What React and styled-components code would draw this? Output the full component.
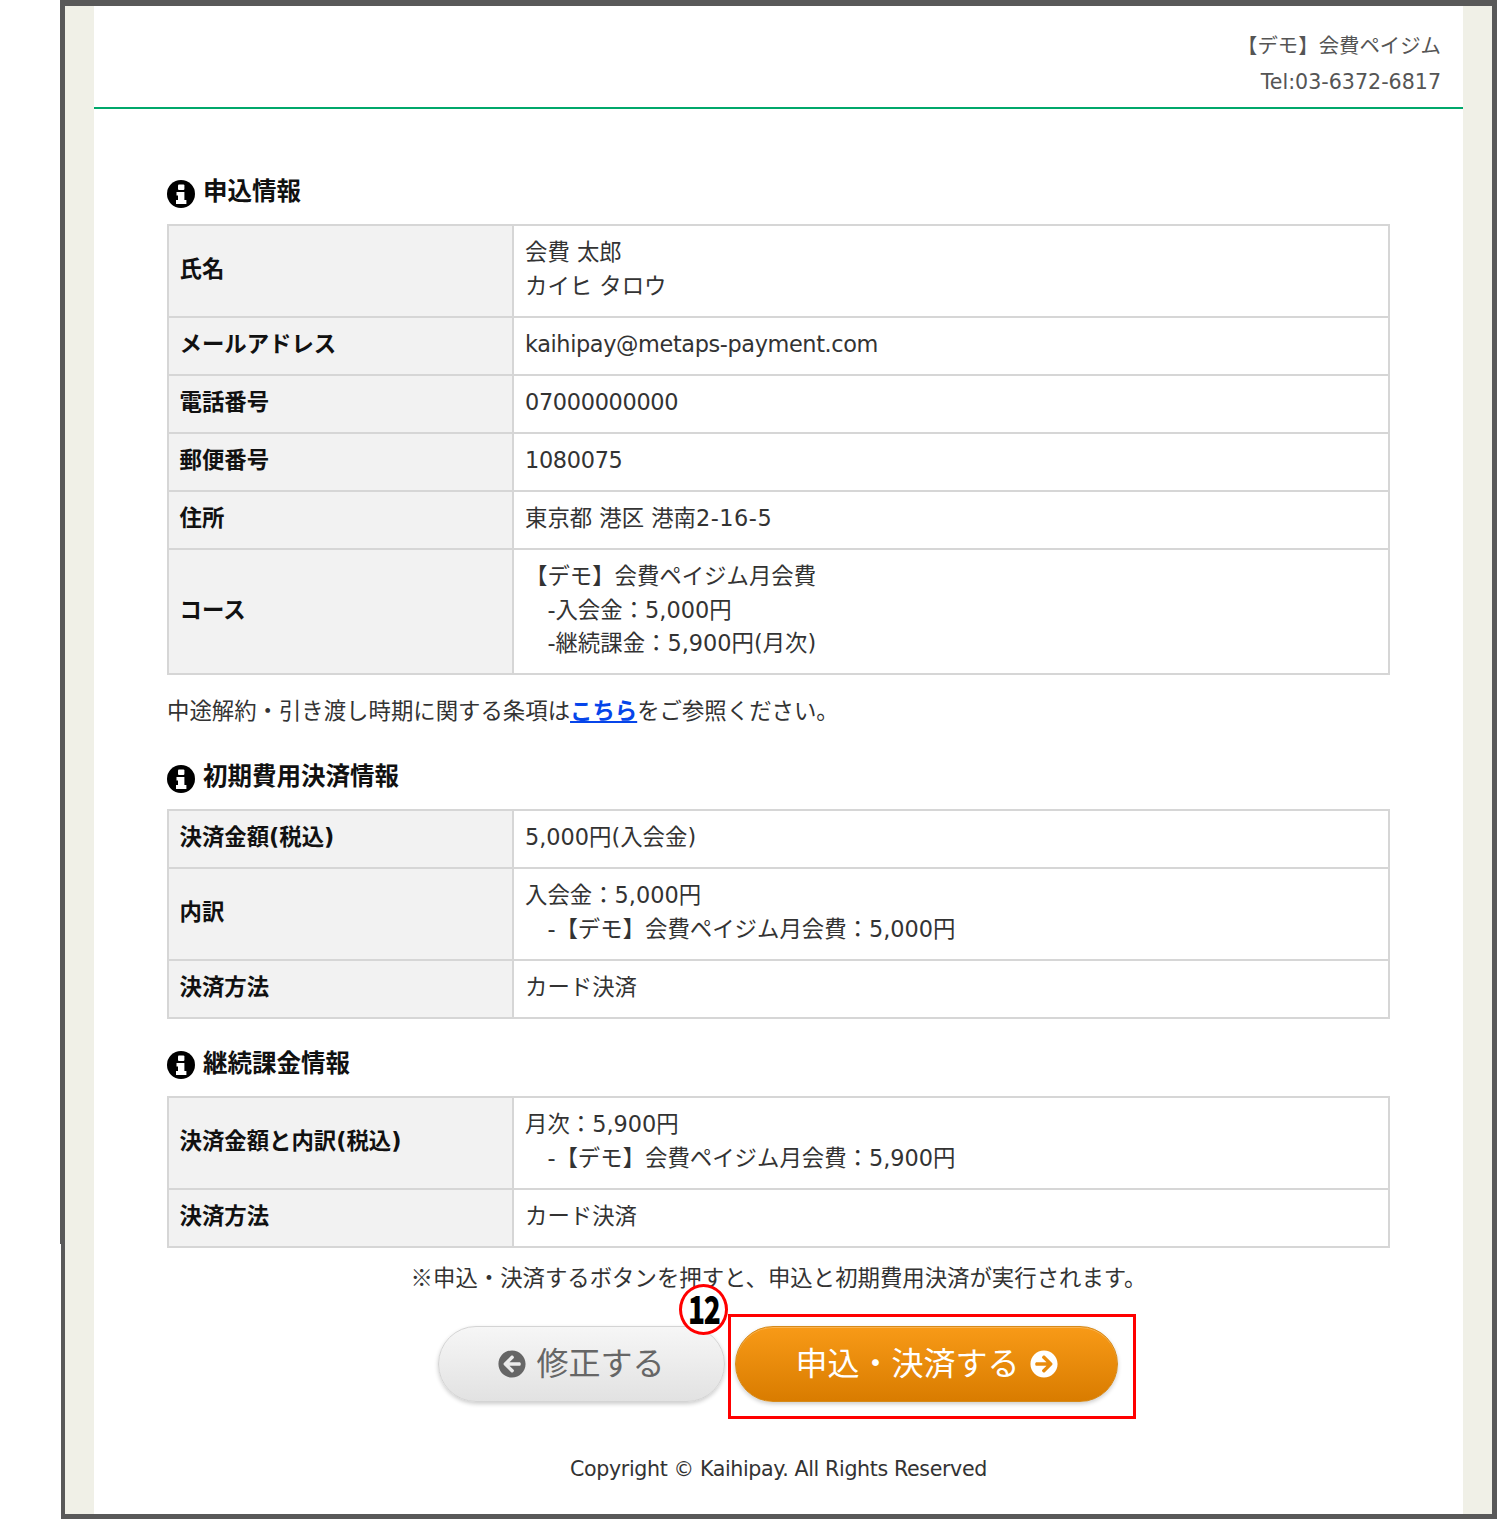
import React from "react";
import styled, { createGlobalStyle } from "styled-components";
import { FaArrowCircleLeft, FaArrowCircleRight } from "react-icons/fa";

const Global = createGlobalStyle`
  html, body { margin: 0; padding: 0; background: #fff; }
  body {
    font-family: "DejaVu Sans", "Noto Sans CJK JP", sans-serif;
    font-size: 22.4px;
    line-height: 33.8px;
    color: #333;
  }
`;

const Page = styled.div`
  width: 1498px;
  height: 1520px;
  padding-left: 60px;
  box-sizing: border-box;
  overflow: hidden;
`;

const Frame = styled.div`
  position: relative;
  width: 1437px;
  height: 1519px;
  box-sizing: border-box;
  border: 5px solid #595959;
  border-top-width: 6px;
  background: #f0f0e7;
  padding: 0 29px;
  &::after {
    content: "";
    position: absolute;
    left: -5px;
    top: 1238px;
    width: 1px;
    height: 280px;
    background: #fff;
  }
`;

const Sheet = styled.div`
  height: 100%;
  background: #fff;
`;

const Header = styled.header`
  height: 103px;
  box-sizing: border-box;
  border-bottom: 2px solid #00a86b;
  padding: 22px 22px 0 0;
  text-align: right;
  font-size: 20.4px;
  line-height: 36px;
  color: #555;
`;

const Tel = styled.div`
  font-size: 20.6px;
`;

const Main = styled.main`
  padding: 65px 73px 0;
`;

const Heading = styled.h2`
  display: flex;
  align-items: center;
  gap: 8px;
  margin: ${(p) => p.$top}px 0 14px;
  height: 36px;
  font-size: 24.5px;
  font-weight: 700;
  line-height: 36px;
  color: #111;
`;

const InfoSvg = styled.svg`
  flex: none;
  width: 28px;
  height: 28px;
  margin-top: 3px;
`;

const InfoIcon = () => (
  <InfoSvg viewBox="0 0 28 28" aria-hidden="true">
    <circle cx="14" cy="14" r="14" fill="#000" />
    <rect x="11" y="4.5" width="6.4" height="5.4" rx="1" fill="#fff" />
    <path d="M9.5 12H17.4V20H19.4V24H9V20H11V15.4H9.5Z" fill="#fff" />
  </InfoSvg>
);

const Table = styled.table`
  width: 100%;
  table-layout: fixed;
  border-collapse: collapse;
`;

const Head = styled.th`
  width: 345px;
  box-sizing: border-box;
  background: #f2f2f2;
  border: 2px solid #d6d6d6;
  padding: 10px 12px 12.2px 10.5px;
  text-align: left;
  font-weight: 700;
  color: #111;
`;

const Cell = styled.td`
  border: 2px solid #d6d6d6;
  padding: 10px 12px 12.2px 11px;
  color: #333;
  white-space: pre;
`;

const Latin = styled.span`
  letter-spacing: ${(p) => p.$spacing}px;
`;

const Mark = styled.span`
  font-family: "Noto Sans CJK JP", sans-serif;
`;

const Note = styled.p`
  margin: 20px 0 0;
  color: #333;
`;

const Link = styled.a`
  color: #0645ea;
  font-weight: 700;
  text-decoration: underline;
`;

const Centered = styled.p`
  margin: 12px 0 0;
  text-align: center;
  color: #333;
`;

const Actions = styled.div`
  display: flex;
  justify-content: flex-start;
  gap: 10px;
  margin: 31px 0 0 271px;
`;

const Button = styled.a`
  display: flex;
  align-items: center;
  justify-content: center;
  gap: 10px;
  box-sizing: border-box;
  width: ${(p) => p.$width}px;
  height: 76px;
  border-radius: 38px;
  font-size: 32px;
  white-space: nowrap;
  svg { width: 28px; height: 28px; flex: none; }
`;

const BackButton = styled(Button)`
  color: #666;
  border: 1px solid #d4d4d4;
  background: linear-gradient(#f6f6f6, #e2e2e2);
  box-shadow: 0 2px 4px rgba(0, 0, 0, 0.2);
`;

const SubmitButton = styled(Button)`
  color: #fff;
  border: 1px solid #d68a1a;
  background: linear-gradient(#f89a17, #d97c00);
  box-shadow: 0 2px 4px rgba(0, 0, 0, 0.2), inset 0 1px 0 rgba(255, 255, 255, 0.25);
`;

const Highlight = styled.div`
  position: absolute;
  left: 663px;
  top: 1308px;
  width: 408px;
  height: 105px;
  box-sizing: border-box;
  border: 3.5px solid #f00;
`;

const Badge = styled.div`
  position: absolute;
  left: 614px;
  top: 1278px;
  width: 49px;
  height: 51px;
  box-sizing: border-box;
  border: 3.5px solid #f00;
  border-radius: 50%;
  background: #fff;
  color: #000;
  display: flex;
  align-items: center;
  justify-content: center;
`;

const BadgeText = styled.span`
  display: block;
  margin-top: -4px;
  font-family: "Noto Sans CJK JP", sans-serif;
  font-size: 39px;
  font-weight: 900;
  letter-spacing: -2px;
  line-height: 1;
  transform: scaleX(0.72);
`;

const Footer = styled.footer`
  margin-top: 51px;
  text-align: center;
  font-size: 20.6px;
  letter-spacing: -0.37px;
  color: #333;
`;

const Row = ({ label, children }) => (
  <tr>
    <Head>{label}</Head>
    <Cell>{children}</Cell>
  </tr>
);

export default function App() {
  return (
    <Page>
      <Global />
      <Frame>
        <Sheet>
          <Header>
            <div>【デモ】会費ペイジム</div>
            <Tel>Tel:03-6372-6817</Tel>
          </Header>
          <Main>
            <Heading $top={0}><InfoIcon />申込情報</Heading>
            <Table>
              <tbody>
                <Row label="氏名">{"会費 太郎\nカイヒ タロウ"}</Row>
                <Row label="メールアドレス"><Latin $spacing={-0.38}>kaihipay@metaps-payment.com</Latin></Row>
                <Row label="電話番号"><Latin $spacing={-0.32}>07000000000</Latin></Row>
                <Row label="郵便番号"><Latin $spacing={-0.32}>1080075</Latin></Row>
                <Row label="住所">東京都 港区 港南<Latin $spacing={0.5}>2-16-5</Latin></Row>
                <Row label="コース">{"【デモ】会費ペイジム月会費\n　-入会金：5,000円\n　-継続課金：5,900円(月次)"}</Row>
              </tbody>
            </Table>
            <Note>中途解約・引き渡し時期に関する条項は<Link>こちら</Link>をご参照ください。</Note>
            <Heading $top={30}><InfoIcon />初期費用決済情報</Heading>
            <Table>
              <tbody>
                <Row label="決済金額(税込)">5,000円(入会金)</Row>
                <Row label="内訳">{"入会金：5,000円\n　-【デモ】会費ペイジム月会費：5,000円"}</Row>
                <Row label="決済方法">カード決済</Row>
              </tbody>
            </Table>
            <Heading $top={27}><InfoIcon />継続課金情報</Heading>
            <Table>
              <tbody>
                <Row label="決済金額と内訳(税込)">{"月次：5,900円\n　-【デモ】会費ペイジム月会費：5,900円"}</Row>
                <Row label="決済方法">カード決済</Row>
              </tbody>
            </Table>
            <Centered><Mark>※</Mark>申込・決済するボタンを押すと、申込と初期費用決済が実行されます。</Centered>
            <Actions>
              <BackButton $width={287}><FaArrowCircleLeft />修正する</BackButton>
              <SubmitButton $width={383}>申込・決済する<FaArrowCircleRight /></SubmitButton>
            </Actions>
            <Footer>Copyright © Kaihipay. All Rights Reserved</Footer>
          </Main>
        </Sheet>
        <Highlight />
        <Badge><BadgeText>12</BadgeText></Badge>
      </Frame>
    </Page>
  );
}
